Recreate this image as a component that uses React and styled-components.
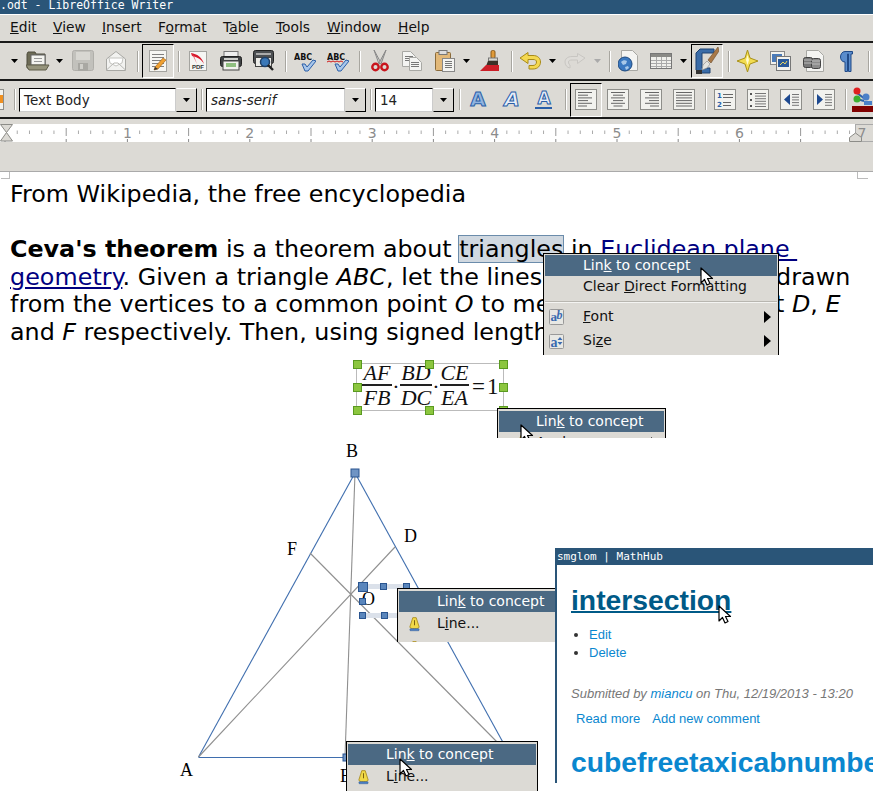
// Library Imports
import React from 'react'
import styled, { createGlobalStyle } from 'styled-components'

const GlobalStyle = createGlobalStyle`
  html, body {
    margin: 0;
    padding: 0;
    background: #fff;
    overflow: hidden;
  }
`

// Small toolbar drawings
const Svg = ({ w, h, children }) => (
  <svg width={w} height={h} viewBox={`0 0 ${w} ${h}`}>
    {children}
  </svg>
)

const Lines = ({ x, y, w, n, gap = 3, color = '#777' }) => (
  <g stroke={color} strokeWidth="1">
    {Array.from({ length: n }).map((_, i) => (
      <line key={i} x1={x} x2={x + w} y1={y + i * gap + 0.5} y2={y + i * gap + 0.5} />
    ))}
  </g>
)

const Page2 = ({ x = 0, y = 0, w = 16, h = 20 }) => (
  <path
    d={`M${x + 0.5} ${y + 0.5}h${w - 5}l5 5v${h - 5}h-${w}z`}
    fill="#f4f4f2"
    stroke="#a8a8a4"
  />
)

const Dropdown = () => (
  <Svg w={7} h={4}>
    <path d="M0 0h7L3.5 4z" fill="#000" />
  </Svg>
)

const DisabledDropdown = () => (
  <Svg w={7} h={4}>
    <path d="M0 0h7L3.5 4z" fill="#aaa" />
  </Svg>
)

const Folder = () => (
  <Svg w={24} h={20}>
    <path d="M1 17V3l1-2h7l1 2h9v14z" fill="#6d6b56" stroke="#4e4c3c" />
    <rect x="5" y="4" width="14" height="10" fill="#f4f4f0" stroke="#666" />
    <Lines x={8} y={7} w={8} n={2} gap={3} color="#999" />
    <path d="M0 14h20l3 0-3 5H3z" fill="#96947c" stroke="#5e5c48" />
  </Svg>
)

const Floppy = () => (
  <Svg w={22} h={22}>
    <rect x="0.5" y="0.5" width="21" height="20" rx="2" fill="#c2c1bc" stroke="#b0afaa" />
    <rect x="4" y="2" width="14" height="8" fill="#d8d7d2" />
    <rect x="6" y="13" width="10" height="8" fill="#a9a8a3" />
    <rect x="8" y="14" width="3" height="5" fill="#d0cfca" />
  </Svg>
)

const Mail = () => (
  <Svg w={20} h={20}>
    <path d="M0.5 8 10 0.5 19.5 8V19.5H0.5z" fill="#f2f2f0" stroke="#a8a8a4" />
    <path d="M3 7h14l-1 5-6 3-6-3z" fill="#fff" stroke="#c4c4c0" />
    <path d="M0.5 19 8 12h4l7.5 7" fill="none" stroke="#b8b8b4" />
  </Svg>
)

const EditDoc = () => (
  <Svg w={20} h={24}>
    <rect x="1.5" y="1.5" width="17" height="21" fill="#f6f6f3" stroke="#a4a4a0" />
    <Lines x={4} y={5} w={12} n={5} gap={3} color="#808080" />
    <path d="M7 18 15 9l3 2-8 9-4 1z" fill="#f0a030" stroke="#9a5a10" strokeWidth=".6" />
    <path d="M6 21l1-3 3 2z" fill="#333" />
  </Svg>
)

const Pdf = () => (
  <Svg w={18} h={20}>
    <rect x="0.5" y="0.5" width="17" height="19" fill="#f6f6f4" stroke="#a4a4a0" />
    <path d="M2 2c6 1 11 4 13 11-3-5-7-7-12-8z" fill="#d8182a" />
    <path d="M3 3 8 13 5 5z" fill="#e85060" />
    <text x="9" y="18" fontFamily="Liberation Sans" fontSize="6" fontWeight="700" textAnchor="middle" fill="#333">
      PDF
    </text>
  </Svg>
)

const Printer = () => (
  <Svg w={22} h={20}>
    <rect x="4" y="0.5" width="14" height="6" fill="#eee" stroke="#777" />
    <rect x="0.5" y="5.5" width="21" height="10" rx="2" fill="#3f4244" stroke="#222" />
    <rect x="4" y="7" width="14" height="2" fill="#cfd0cc" />
    <rect x="3" y="10" width="16" height="9" fill="#f2f2ee" stroke="#444" />
    <rect x="6" y="12" width="10" height="4" fill="#8fbf80" />
  </Svg>
)

const Preview = () => (
  <Svg w={22} h={22}>
    <rect x="0.5" y="0.5" width="20" height="13" rx="2" fill="#4c4f52" stroke="#222" />
    <rect x="3" y="3" width="15" height="2" fill="#aaa" />
    <rect x="2.5" y="7.5" width="16" height="9" fill="#ecece8" stroke="#444" />
    <circle cx="12" cy="12" r="4.5" fill="#3a78b8" stroke="#1d3f68" strokeWidth="1.5" />
    <path d="M15 15l5 5" stroke="#222" strokeWidth="2.4" />
  </Svg>
)

const AbcCheck = ({ wavy }) => (
  <Svg w={22} h={21}>
    <text x="0" y="9" fontFamily="DejaVu Sans" fontSize="8" fontWeight="700" fill="#111">
      ABC
    </text>
    {wavy && <path d="M0 11l2-1 2 1 2-1 2 1 2-1 2 1 2-1 2 1" stroke="#d01818" fill="none" />}
    <path
      d="M8 13l3 0 2 3 6-7 3 1-8 10h-3z"
      fill="#a8c6ea"
      stroke="#2a5ea8"
      strokeWidth="1"
    />
  </Svg>
)

const Scissors = () => (
  <Svg w={18} h={22}>
    <path d="M3 0 10 13 8 14z" fill="#d8d8d4" stroke="#888" />
    <path d="M15 0 8 13 10 14z" fill="#c4c4c0" stroke="#888" />
    <circle cx="4.5" cy="17" r="3.2" fill="none" stroke="#c8141c" strokeWidth="2.4" />
    <circle cx="13.5" cy="17" r="3.2" fill="none" stroke="#c8141c" strokeWidth="2.4" />
  </Svg>
)

const Copy = () => (
  <Svg w={20} h={20}>
    <Page2 x={0} y={0} w={13} h={15} />
    <Lines x={3} y={5} w={8} n={3} gap={2} />
    <Page2 x={7} y={6} w={12} h={13} />
    <Lines x={9} y={11} w={8} n={3} gap={2} />
  </Svg>
)

const Paste = () => (
  <Svg w={20} h={22}>
    <rect x="0.5" y="2.5" width="15" height="18" rx="1" fill="#e2b878" stroke="#8a6a3a" />
    <rect x="4" y="0.5" width="8" height="4" fill="#ddd" stroke="#777" />
    <rect x="7.5" y="8.5" width="12" height="13" fill="#f4f4f2" stroke="#888" />
    <Lines x={10} y={11} w={7} n={4} gap={2} />
  </Svg>
)

const Brush = () => (
  <Svg w={21} h={22}>
    <rect x="11" y="0.5" width="4" height="8" rx="1.5" fill="#e09a38" stroke="#8a5a18" />
    <rect x="8.5" y="8" width="9" height="3" fill="#d8d8d0" stroke="#777" />
    <path d="M8 11h10v5H6z" fill="#3a3228" />
    <path d="M0 21 6 15h13v6z" fill="#cc1f28" />
  </Svg>
)

const Undo = () => (
  <Svg w={22} h={18}>
    <path
      d="M1 6 9 0.5V3.5h5c5 0 7.5 3 7.5 6.5S19 17 14 17H10V13.5h4c2 0 3.5-1.5 3.5-3.5S16 7.5 14 7.5H9V11.5z"
      fill="#f4d850"
      stroke="#a88a18"
    />
  </Svg>
)

const Redo = () => (
  <Svg w={22} h={16}>
    <path
      d="M21 5 13.5 0.5V3.5H8C3.5 3.5 1 6 1 9s2 5.5 5 6V12c-1-.5-1.5-1.5-1.5-3S6 7 8 7h5.5v3.5z"
      fill="#dedcd8"
      stroke="#c8c6c2"
    />
  </Svg>
)

const Globe = () => (
  <Svg w={20} h={22}>
    <Page2 x={3} y={0} w={16} h={20} />
    <circle cx="7" cy="14" r="7" fill="#3a78c0" stroke="#1e4a80" />
    <path d="M3 12c2-2 4-2 6-1l-1 3-3 1zM7 17l3-1 1 2-3 2z" fill="#a8c8e8" />
  </Svg>
)

const Table = () => (
  <Svg w={22} h={16}>
    <rect x="0.5" y="0.5" width="21" height="15" fill="#f0f0ec" stroke="#777" />
    <rect x="1" y="1" width="20" height="3" fill="#8a8a86" />
    <g stroke="#aaa">
      <line x1="1" x2="21" y1="7.5" y2="7.5" />
      <line x1="1" x2="21" y1="10.5" y2="10.5" />
      <line x1="1" x2="21" y1="13.5" y2="13.5" />
      <line x1="6.5" x2="6.5" y1="4" y2="15" />
      <line x1="11.5" x2="11.5" y1="4" y2="15" />
      <line x1="16.5" x2="16.5" y1="4" y2="15" />
    </g>
  </Svg>
)

const StyleBrush = () => (
  <Svg w={24} h={28}>
    <path d="M1 6 5 2h14v4H7v15h8v5H4l-3-3z" fill="#3a6ca8" stroke="#1e4272" />
    <path d="M23 0 13 13l3 3L24 4z" fill="#a87848" stroke="#6a4a28" strokeWidth=".6" />
    <path d="M12 14l3 3-3 4-5 2 1-5z" fill="#e4e4e0" stroke="#888" strokeWidth=".6" />
    <rect x="1" y="23" width="6" height="4" fill="#333" />
  </Svg>
)

const Star = () => (
  <Svg w={21} h={22}>
    <path d="M10.5 0 13 8l8 3-8 3-2.5 8L8 14l-8-3 8-3z" fill="#f2dc50" stroke="#a89018" />
    <path d="M10.5 5 12 10 10.5 15 9 10z" fill="#fffbd0" />
  </Svg>
)

const Gallery = () => (
  <Svg w={21} h={20}>
    <rect x="0.5" y="0.5" width="14" height="13" fill="#f2f2ee" stroke="#888" />
    <rect x="2" y="3" width="10" height="8" fill="#4a7ab8" />
    <rect x="6.5" y="5.5" width="14" height="14" fill="#f2f2ee" stroke="#777" />
    <rect x="8" y="8" width="11" height="8" fill="#2a5a9a" />
    <path d="M10 14l3-3 2 2 2-3" stroke="#e8d860" fill="none" />
  </Svg>
)

const Database = () => (
  <Svg w={21} h={22}>
    <Page2 x={3} y={0} w={17} h={21} />
    <rect x="0.5" y="7.5" width="9" height="10" rx="2" fill="#777" stroke="#444" />
    <rect x="8.5" y="8.5" width="9" height="10" rx="2" fill="#8c8c8c" stroke="#444" />
    <path d="M1 10h8M9 11h8M9 14h8M1 13h8" stroke="#bbb" />
  </Svg>
)

const Pilcrow = () => (
  <Svg w={13} h={21}>
    <path
      d="M5 0.5h7.5V3H11v17.5H8.5V3H7.5v17.5H5V11C2 11 0.5 8.5 0.5 6S2 0.5 5 0.5z"
      fill="#5a8ccc"
      stroke="#204a88"
    />
  </Svg>
)

const FontA = ({ italic, underline, outline }) => (
  <Svg w={20} h={21}>
    <text
      x="10"
      y={underline ? 15 : 17}
      textAnchor="middle"
      fontFamily="DejaVu Sans"
      fontSize={underline ? 17 : 20}
      fontWeight="700"
      fontStyle={italic ? 'italic' : 'normal'}
      fill={outline ? '#e8eef8' : '#90b4e0'}
      stroke="#2a5ea8"
      strokeWidth="1"
    >
      A
    </text>
    {underline && <rect x="1" y="18" width="17" height="2" fill="#2a5ea8" />}
  </Svg>
)

const ParaFrame = ({ children }) => (
  <Svg w={22} h={21}>
    <rect x="0.5" y="0.5" width="21" height="20" fill="#f2f2ee" stroke="#8e8e8a" />
    {children}
  </Svg>
)

const Align = ({ kind }) => {
  const widths = [14, 10, 14, 10, 14, 9]
  return (
    <ParaFrame>
      <g stroke="#666">
        {widths.map((wd, i) => {
          const len = kind === 'justify' ? 16 : wd
          let x = 3
          if (kind === 'center') x = 11 - len / 2
          if (kind === 'right') x = 19 - len
          return <line key={i} x1={x} x2={x + len} y1={3.5 + i * 2.7} y2={3.5 + i * 2.7} />
        })}
      </g>
    </ParaFrame>
  )
}

const Numbered = () => (
  <ParaFrame>
    <text x="3" y="9" fontSize="7" fontFamily="DejaVu Sans" fontWeight="700" fill="#2a5ea8">1</text>
    <text x="3" y="18" fontSize="7" fontFamily="DejaVu Sans" fontWeight="700" fill="#2a5ea8">2</text>
    <Lines x={9} y={5} w={10} n={2} gap={3} color="#666" />
    <Lines x={9} y={13} w={8} n={2} gap={3} color="#666" />
  </ParaFrame>
)

const Bullets = () => (
  <ParaFrame>
    <g fill="#555">
      <rect x="3" y="4" width="2" height="2" />
      <rect x="3" y="10" width="2" height="2" />
      <rect x="3" y="16" width="2" height="2" />
    </g>
    <Lines x={8} y={4} w={11} n={6} gap={2.6} color="#777" />
  </ParaFrame>
)

const Indent = ({ more }) => (
  <ParaFrame>
    <path d={more ? 'M4 5v11l6-5.5z' : 'M10 5v11l-6-5.5z'} fill="#1e4a90" />
    <Lines x={12} y={5} w={7} n={5} gap={2.7} color="#777" />
  </ParaFrame>
)

const Navigator = () => (
  <Svg w={22} h={26}>
    <path d="M5 6l8 6M5 12l7 2" stroke="#2a5ea8" strokeWidth="2" />
    <circle cx="5" cy="4" r="3.5" fill="#e02020" />
    <circle cx="5" cy="12" r="3.5" fill="#3cb030" />
    <circle cx="14" cy="10" r="3.5" fill="#4a80c8" />
    <path d="M12 14h8v4h-8z" fill="#4a80c8" />
    <rect x="0" y="19" width="22" height="6" fill="#800000" />
  </Svg>
)

const FontBadge = () => (
  <Svg w={15} h={16}>
    <rect x="0.5" y="0.5" width="14" height="15" rx="1" fill="#e8e8e4" stroke="#999" />
    <text x="1.5" y="12" fontFamily="Liberation Serif" fontSize="13" fontWeight="700" fill="#3a6ab0">a</text>
    <text x="7.5" y="10" fontFamily="Liberation Serif" fontSize="12" fontStyle="italic" fontWeight="700" fill="#3a6ab0">b</text>
  </Svg>
)

const SizeBadge = () => (
  <Svg w={15} h={15}>
    <rect x="0.5" y="0.5" width="14" height="14" rx="1" fill="#e8e8e4" stroke="#999" />
    <text x="1.5" y="13" fontFamily="Liberation Serif" fontSize="14" fontWeight="700" fill="#3a6ab0">a</text>
    <path d="M8.5 6l2.5-3L13.5 6zM8.5 8l2.500 3L13.5 8z" fill="#3a6ab0" />
  </Svg>
)

const LineIcon = () => (
  <svg width="11" height="16" viewBox="0 0 13 17">
    <path d="M4.5 1h4L12 12c0 1.5-2 2-5.500 2S1 13.5 1 12z" fill="#f0d848" stroke="#a88a18" />
    <path d="M6.5 4v6" stroke="#7a6010" strokeWidth="1.2" />
    <rect x="1" y="14" width="11" height="2.5" rx="1" fill="#4a80c8" stroke="#2a5088" strokeWidth=".5" />
  </svg>
)

const PartIcon = () => (
  <Svg w={4} h={21}>
    <rect x="-4" y="0.5" width="7.5" height="20" fill="#f2f2ee" stroke="#8e8e8a" />
    <rect x="0" y="6" width="3" height="8" fill="#f09020" />
  </Svg>
)

const CursorShape = () => (
  <svg width="14" height="20" viewBox="0 0 14 20">
    <path
      d="M1 1v15l3.5-3.5L7 18l3-1.5-2.5-5H12.5z"
      fill="#fff"
      stroke="#000"
      strokeWidth="1.2"
      strokeLinejoin="round"
    />
  </svg>
)

const Cursor = ({ x, y }) => (
  <CursorBox $x={x} $y={y}>
    <CursorShape />
  </CursorBox>
)

// Data
const menuItems = [
  { key: 'edit', pre: '', u: 'E', post: 'dit', x: 10 },
  { key: 'view', pre: '', u: 'V', post: 'iew', x: 53 },
  { key: 'insert', pre: '', u: 'I', post: 'nsert', x: 102 },
  { key: 'format', pre: 'F', u: 'o', post: 'rmat', x: 158 },
  { key: 'table', pre: 'T', u: 'a', post: 'ble', x: 223 },
  { key: 'tools', pre: '', u: 'T', post: 'ools', x: 276 },
  { key: 'window', pre: '', u: 'W', post: 'indow', x: 327 },
  { key: 'help', pre: '', u: 'H', post: 'elp', x: 398 },
]

const mainTools = [
  { x: 11, w: 7, icon: <Dropdown /> },
  { x: 26, w: 24, icon: <Folder /> },
  { x: 56, w: 7, icon: <Dropdown /> },
  { x: 72, w: 22, icon: <Floppy /> },
  { x: 106, w: 20, icon: <Mail /> },
  { x: 137, sep: true },
  { x: 142, w: 32, active: true, icon: <EditDoc /> },
  { x: 178, sep: true },
  { x: 189, w: 18, icon: <Pdf /> },
  { x: 220, w: 22, icon: <Printer /> },
  { x: 253, w: 22, icon: <Preview /> },
  { x: 285, sep: true },
  { x: 294, w: 22, icon: <AbcCheck /> },
  { x: 327, w: 22, icon: <AbcCheck wavy /> },
  { x: 359, sep: true },
  { x: 371, w: 18, icon: <Scissors /> },
  { x: 402, w: 20, icon: <Copy /> },
  { x: 435, w: 20, icon: <Paste /> },
  { x: 463, w: 7, icon: <Dropdown /> },
  { x: 480, w: 21, icon: <Brush /> },
  { x: 511, sep: true },
  { x: 519, w: 22, icon: <Undo /> },
  { x: 549, w: 7, icon: <Dropdown /> },
  { x: 564, w: 22, icon: <Redo /> },
  { x: 594, w: 7, icon: <DisabledDropdown /> },
  { x: 609, sep: true },
  { x: 618, w: 20, icon: <Globe /> },
  { x: 650, w: 22, icon: <Table /> },
  { x: 680, w: 7, icon: <Dropdown /> },
  { x: 691, w: 32, active: true, icon: <StyleBrush /> },
  { x: 728, sep: true },
  { x: 737, w: 21, icon: <Star /> },
  { x: 770, w: 21, icon: <Gallery /> },
  { x: 803, w: 21, icon: <Database /> },
  { x: 840, w: 13, icon: <Pilcrow /> },
  { x: 868, sep: true },
]

const formatTools = [
  { x: 0, w: 4, icon: <PartIcon /> },
  { x: 14, sep: true },
  { x: 19, w: 178, combo: 'Text Body', field: 157 },
  { x: 201, sep: true },
  { x: 206, w: 160, combo: 'sans-serif', italic: true, field: 139 },
  { x: 370, sep: true },
  { x: 375, w: 79, combo: '14', field: 58 },
  { x: 459, sep: true },
  { x: 468, w: 20, icon: <FontA /> },
  { x: 502, w: 20, icon: <FontA italic outline /> },
  { x: 534, w: 20, icon: <FontA underline outline /> },
  { x: 565, sep: true },
  { x: 570, w: 32, active: true, icon: <Align kind="left" /> },
  { x: 607, w: 22, icon: <Align kind="center" /> },
  { x: 640, w: 22, icon: <Align kind="right" /> },
  { x: 673, w: 22, icon: <Align kind="justify" /> },
  { x: 705, sep: true },
  { x: 714, w: 22, icon: <Numbered /> },
  { x: 747, w: 22, icon: <Bullets /> },
  { x: 780, w: 22, icon: <Indent /> },
  { x: 813, w: 22, icon: <Indent more /> },
  { x: 845, sep: true },
  { x: 852, w: 22, icon: <Navigator /> },
]

const inchMarks = [1, 2, 3, 4, 5, 6]
const INCH = 122.4
const RULER_ORIGIN = 5

// Works out the gap in front of each tool from where it starts
const withGaps = items =>
  items.map((item, i) => {
    const prev = items[i - 1]
    const prevEnd = prev ? prev.x + (prev.sep ? 2 : prev.w) : 0
    return { ...item, gap: item.x - prevEnd }
  })

const ToolRow = ({ items, lowered }) => (
  <Toolbar $lowered={lowered}>
    {withGaps(items).map((item, i) => {
      if (item.sep) return <Separator key={i} $gap={item.gap} />
      if (item.combo) {
        return (
          <Combo key={i} $gap={item.gap} $w={item.w}>
            <ComboField $w={item.field} $italic={item.italic}>
              {item.combo}
            </ComboField>
            <ComboButton>
              <Dropdown />
            </ComboButton>
          </Combo>
        )
      }
      return (
        <Tool key={i} $gap={item.gap} $w={item.w} $active={item.active}>
          {item.icon}
        </Tool>
      )
    })}
  </Toolbar>
)

const Ruler = () => {
  const ticks = []
  for (let i = 0; i < 72; i++) {
    const x = RULER_ORIGIN + (i * INCH) / 10
    const tenth = i % 10
    if (tenth === 0) continue
    if (tenth === 5) {
      ticks.push(<line key={i} x1={x} x2={x} y1="4" y2="12" stroke="#999" />)
    } else {
      ticks.push(<line key={i} x1={x} x2={x} y1="6.5" y2="10" stroke="#aaa" />)
    }
  }
  const feet = []
  for (let i = 0; i < 15; i++) {
    const x = RULER_ORIGIN + (i * INCH) / 2
    feet.push(<line key={i} x1={x} x2={x} y1="15" y2="18" stroke="#888" />)
  }
  return (
    <RulerBand>
      <svg width="873" height="18" viewBox="0 0 873 18">
        <rect x="0" y="0" width="873" height="18" fill="#fff" />
        {ticks}
        {feet}
        {inchMarks.map(n => (
          <text
            key={n}
            x={RULER_ORIGIN + n * INCH}
            y="14"
            textAnchor="middle"
            fontFamily="DejaVu Sans"
            fontSize="14"
            fill="#8c8c8c"
          >
            {n}
          </text>
        ))}
        <path d="M0.5 0.5h12L6.5 8.5 12.5 17H0.5L6.5 8.5z" fill="#dcdad5" stroke="#8c8c88" />
        <rect x="855.5" y="0.5" width="18" height="17" fill="#dcdad5" stroke="#aaa" />
        <text x="862" y="14" textAnchor="middle" fontFamily="DejaVu Sans" fontSize="14" fill="#8c8c8c">
          7
        </text>
        <path d="M849.5 17.5v-4L855.5 9l6 4.5v4z" fill="#dcdad5" stroke="#8c8c88" />
      </svg>
    </RulerBand>
  )
}

const Figure = () => (
  <FigureBox>
    <svg width="873" height="351" viewBox="0 440 873 351">
      <g stroke="#3f6eae" strokeWidth="1.1" fill="none">
        <line x1="198.5" y1="757" x2="355" y2="473" />
        <line x1="355" y1="473" x2="511" y2="757" />
        <line x1="198.5" y1="757.5" x2="511" y2="757.5" />
      </g>
      <g stroke="#8f8f8f" strokeWidth="1.1" fill="none">
        <line x1="355" y1="473" x2="345" y2="757" />
        <line x1="198.5" y1="757" x2="395" y2="547" />
        <line x1="310" y1="553" x2="500" y2="745" />
      </g>
      <rect x="351" y="469" width="8" height="8" fill="#6f94c4" stroke="#2a5590" />
      <rect x="343" y="754" width="7" height="7" fill="#6f94c4" stroke="#2a5590" />
      <rect x="361" y="584" width="46" height="5" fill="#dbe1ea" />
      <rect x="361" y="613" width="46" height="5" fill="#dbe1ea" />
      <g fontFamily="Liberation Serif" fontSize="18" fill="#000">
        <text x="346" y="457">B</text>
        <text x="287" y="555">F</text>
        <text x="404" y="542">D</text>
        <text x="362" y="605">O</text>
        <text x="180" y="776">A</text>
        <text x="340" y="782">E</text>
      </g>
      <g fill="#5a86bc" stroke="#2a5590">
        <rect x="358.5" y="582.5" width="9" height="9" />
        <rect x="380.5" y="583.5" width="6" height="6" />
        <rect x="403.5" y="583.5" width="6" height="6" />
        <rect x="359.5" y="598.5" width="6" height="6" />
        <rect x="359.5" y="612.5" width="6" height="6" />
        <rect x="381.5" y="612.5" width="6" height="6" />
      </g>
    </svg>
  </FigureBox>
)

const Fraction = ({ top, bottom, w }) => (
  <Frac $w={w}>
    <FracTop>{top}</FracTop>
    <FracBottom>{bottom}</FracBottom>
  </Frac>
)

const LinkRow = () => (
  <MenuRow $active>
    Lin<u>k</u> to concept
  </MenuRow>
)

export default function App() {
  return (
    <>
      <GlobalStyle />
      <Page>
        <TitleBar>.odt - LibreOffice Writer</TitleBar>
        <MenuBar>
          {menuItems.map((m, i) => (
            <MenuLabel key={m.key} $gap={i === 0 ? m.x : 0} $w={menuItems[i + 1] ? menuItems[i + 1].x - m.x : 60}>
              {m.pre}
              <u>{m.u}</u>
              {m.post}
            </MenuLabel>
          ))}
        </MenuBar>
        <ToolRow items={mainTools} />
        <ToolRow items={formatTools} lowered />
        <RulerGap />
        <Ruler />
        <GrayGap />
        <Doc>
          <CornerLeft />
          <CornerRight />
          <Line>From Wikipedia, the free encyclopedia</Line>
          <Line>&nbsp;</Line>
          <Line>
            <b>Ceva's theorem</b> is a theorem about <Selected>triangles</Selected> in{' '}
            <DocLink>Euclidean plane </DocLink>
          </Line>
          <Line $spread>
            <DocLink>geometry</DocLink>. Given a triangle <i>ABC</i>, let the lines <i>AO</i>, <i>BO</i> and{' '}
            <i>CO</i> be drawn
          </Line>
          <Line>
            from the vertices to a common point <i>O</i> to meet opposite sides at <i>D</i>, <i>E</i>
          </Line>
          <Line>
            and <i>F</i> respectively. Then, using signed lengths of segments,
          </Line>
          <Formula>
            <FormulaFrame>
              <Fraction top="AF" bottom="FB" w={30} />
              <Dot>·</Dot>
              <Fraction top="BD" bottom="DC" w={32} />
              <Dot>·</Dot>
              <Fraction top="CE" bottom="EA" w={29} />
              <Equals>=1</Equals>
              <Handle $x="0%" $y="0%" />
              <Handle $x="49%" $y="0%" />
              <Handle $x="100%" $y="0%" />
              <Handle $x="0%" $y="50%" />
              <Handle $x="100%" $y="50%" />
              <Handle $x="0%" $y="100%" />
              <Handle $x="49%" $y="100%" />
              <Handle $x="100%" $y="100%" />
            </FormulaFrame>
          </Formula>
          <Figure />
        </Doc>

        <MenuBox $x={543} $y={253} $w={236} $h={102} $indent={38} $tight>
          <LinkRow />
          <MenuRow>
            Clear <u>D</u>irect Formatting
          </MenuRow>
          <MenuSeparator />
          <MenuRow $tall>
            <MenuIcon $left={4} $top={3}>
              <FontBadge />
            </MenuIcon>
            <u>F</u>ont
            <SubArrow />
          </MenuRow>
          <MenuRow $tall>
            <MenuIcon $left={4} $top={4}>
              <SizeBadge />
            </MenuIcon>
            Si<u>z</u>e
            <SubArrow />
          </MenuRow>
        </MenuBox>

        <MenuBox $x={497} $y={408} $w={169} $h={30} $indent={37}>
          <LinkRow />
          <MenuRow>
            <MenuIcon $left={18} $top={2}>
              <LineIcon />
            </MenuIcon>
            Anchor
            <SubArrow />
          </MenuRow>
          <CursorBox $x={22} $y={15}>
            <CursorShape />
          </CursorBox>
        </MenuBox>

        <MenuBox $x={397} $y={588} $w={170} $h={54} $indent={38}>
          <LinkRow />
          <MenuRow $icon>
            <MenuIcon $left={10} $top={4}>
              <LineIcon />
            </MenuIcon>
            L<u>i</u>ne...
          </MenuRow>
          <MenuRow>
            <MenuIcon $left={10} $top={5}>
              <LineIcon />
            </MenuIcon>
          </MenuRow>
        </MenuBox>

        <MenuBox $x={346} $y={741} $w={192} $h={50} $indent={38}>
          <LinkRow />
          <MenuRow $icon>
            <MenuIcon $left={10} $top={4}>
              <LineIcon />
            </MenuIcon>
            L<u>i</u>ne...
          </MenuRow>
        </MenuBox>

        <HubWindow>
          <HubTitle>smglom | MathHub</HubTitle>
          <HubBody>
            <HubHeading>intersection</HubHeading>
            <HubList>
              <li>
                <HubLink>Edit</HubLink>
              </li>
              <li>
                <HubLink>Delete</HubLink>
              </li>
            </HubList>
            <Submitted>
              Submitted by <HubLink>miancu</HubLink> on Thu, 12/19/2013 - 13:20
            </Submitted>
            <HubActions>
              <HubLink>Read more</HubLink>
              <HubLink>Add new comment</HubLink>
            </HubActions>
            <HubNext>cubefreetaxicabnumber</HubNext>
          </HubBody>
        </HubWindow>

        <Cursor x={700} y={267} />
        <Cursor x={718} y={605} />
        <Cursor x={399} y={758} />
      </Page>
    </>
  )
}

const Page = styled.div`
  position: relative;
  width: 873px;
  height: 791px;
  overflow: hidden;
  background: #fff;
  font-family: 'DejaVu Sans', sans-serif;
`

const TitleBar = styled.div`
  height: 14px;
  line-height: 11px;
  background: #2a5578;
  color: #fff;
  font-family: 'DejaVu Sans Mono', monospace;
  font-size: 11.5px;
  white-space: nowrap;
  border-bottom: 1px solid #fff;
  box-sizing: content-box;
`

const MenuBar = styled.div`
  height: 24px;
  padding-bottom: 2px;
  display: flex;
  align-items: center;
  background: #dcdad5;
  border-bottom: 2px solid #1a1a1a;
  box-sizing: content-box;
  font-size: 13.8px;
  color: #111;
`

const MenuLabel = styled.span`
  margin-left: ${p => p.$gap}px;
  width: ${p => p.$w}px;
  flex: none;
  white-space: nowrap;
`

const Toolbar = styled.div`
  height: ${p => (p.$lowered ? '35px' : '36px')};
  padding-top: ${p => (p.$lowered ? '1px' : '0')};
  display: flex;
  align-items: center;
  background: #dcdad5;
  border-bottom: 2px solid #1a1a1a;
  box-sizing: content-box;
  overflow: hidden;
`

const Tool = styled.div`
  flex: none;
  margin-left: ${p => p.$gap}px;
  width: ${p => p.$w}px;
  height: ${p => (p.$active ? '34px' : 'auto')};
  display: flex;
  align-items: center;
  justify-content: center;
  box-sizing: border-box;
  border: ${p => (p.$active ? '1px solid' : '0')};
  border-color: #000 #fff #fff #000;
  svg {
    display: block;
    flex: none;
  }
`

const Separator = styled.div`
  flex: none;
  margin-left: ${p => p.$gap}px;
  width: 1px;
  height: 21px;
  background: #a8a6a0;
  border-right: 1px solid #fff;
`

const Combo = styled.div`
  flex: none;
  margin-left: ${p => p.$gap}px;
  width: ${p => p.$w}px;
  height: 24px;
  display: flex;
`

const ComboField = styled.div`
  width: ${p => p.$w}px;
  box-sizing: border-box;
  flex: none;
  background: #fff;
  border: 1px solid;
  border-color: #000 #ccc #ccc #000;
  padding-left: 4px;
  font-size: 13.5px;
  font-style: ${p => (p.$italic ? 'italic' : 'normal')};
  line-height: 22px;
  color: #222;
`

const ComboButton = styled.div`
  flex: 1;
  box-sizing: border-box;
  display: flex;
  align-items: center;
  justify-content: center;
  background: #dcdad5;
  border: 1px solid;
  border-color: #fff #000 #000 #dcdad5;
`

const RulerGap = styled.div`
  height: 5px;
  background: #dcdad5;
`

const RulerBand = styled.div`
  height: 18px;
  svg {
    display: block;
  }
`

const GrayGap = styled.div`
  height: 29px;
  background: #dcdad5;
  border-bottom: 1px solid #aaa;
  box-sizing: content-box;
`

const Doc = styled.div`
  position: relative;
  padding: 9px 0 0 10px;
  background: #fff;
  color: #000;
  font-size: 23.8px;
`

const CornerLeft = styled.div`
  position: absolute;
  left: 1px;
  top: 0;
  width: 8px;
  height: 6px;
  border-right: 1px solid #bbb;
  border-bottom: 1px solid #bbb;
`

const CornerRight = styled.div`
  position: absolute;
  left: 857px;
  top: 0;
  width: 10px;
  height: 6px;
  border-left: 1px solid #bbb;
  border-bottom: 1px solid #bbb;
`

const Line = styled.div`
  height: 27.6px;
  line-height: 27.6px;
  white-space: nowrap;
  letter-spacing: ${p => (p.$spread ? '0.06px' : 'normal')};
`

const Selected = styled.span`
  display: inline-block;
  line-height: 26px;
  height: 26px;
  background: #d0d8e0;
  outline: 1px solid #6b8cab;
`

const DocLink = styled.span`
  color: #000080;
  text-decoration: underline;
  white-space: pre;
`

const Formula = styled.div`
  display: flex;
  margin: 16px 0 0 346px;
  height: 48px;
`

const FormulaFrame = styled.div`
  position: relative;
  width: 148px;
  height: 48px;
  box-sizing: border-box;
  border: 1px solid #bbb;
  display: flex;
  align-items: center;
  padding-left: 5px;
  font-family: 'Liberation Serif', serif;
  font-size: 22px;
  font-style: italic;
  color: #111;
`

const Handle = styled.div`
  position: absolute;
  left: ${p => p.$x};
  top: ${p => p.$y};
  width: 7px;
  height: 7px;
  margin: -4px 0 0 -4px;
  background: #8cc63f;
  border: 1px solid #5a9a20;
`

const Frac = styled.div`
  display: flex;
  flex-direction: column;
  align-items: center;
  width: ${p => p.$w}px;
  flex: none;
  line-height: 23px;
  margin-top: -1px;
`

const FracTop = styled.div`
  align-self: stretch;
  text-align: center;
  line-height: 22px;
  border-bottom: 2px solid #222;
`

const FracBottom = styled.div`
  text-align: center;
  line-height: 24px;
`

const Dot = styled.span`
  font-style: normal;
  width: 8px;
  flex: none;
  text-align: center;
`

const Equals = styled.span`
  font-style: normal;
  margin-left: 3px;
  font-size: 23px;
  letter-spacing: 2px;
`

const FigureBox = styled.div`
  margin: 29px 0 0 -10px;
  height: 351px;
  svg {
    display: block;
  }
`

const MenuBox = styled.div`
  position: absolute;
  left: ${p => p.$x}px;
  top: ${p => p.$y}px;
  width: ${p => p.$w}px;
  height: ${p => p.$h}px;
  overflow: hidden;
  box-sizing: border-box;
  background: #dcdad5;
  border: 1px solid #000;
  border-bottom: 0;
  padding: ${p => (p.$tight ? '1px 1px 0' : '2px 1px 0')};
  font-size: 14px;
  color: #111;
  --menu-indent: ${p => p.$indent}px;
`

const rowHeight = p => {
  if (p.$tall) return '24px'
  return p.$icon ? '23px' : '21px'
}

const rowLine = p => {
  if (p.$icon) return '22px'
  return '20px'
}

const MenuRow = styled.div`
  position: relative;
  height: ${rowHeight};
  line-height: ${rowLine};
  padding-left: var(--menu-indent);
  white-space: nowrap;
  background: ${p => (p.$active ? '#4b6983' : 'transparent')};
  color: ${p => (p.$active ? '#fff' : 'inherit')};
`

const MenuSeparator = styled.div`
  height: 9px;
  box-sizing: border-box;
  padding-top: 4px;
  &::before {
    content: '';
    display: block;
    height: 1px;
    background: #f4f4f2;
    border-top: 1px solid #b8b6b0;
  }
`

const MenuIcon = styled.span`
  position: absolute;
  left: ${p => p.$left}px;
  top: ${p => p.$top}px;
  display: flex;
`

const SubArrow = styled.span`
  position: absolute;
  right: 6px;
  top: 5px;
  width: 0;
  height: 0;
  border-left: 7px solid #000;
  border-top: 6px solid transparent;
  border-bottom: 6px solid transparent;
`

const HubWindow = styled.div`
  position: absolute;
  left: 555px;
  top: 548px;
  width: 318px;
  height: 235px;
  overflow: hidden;
  box-sizing: border-box;
  background: #fff;
  border-left: 2px solid #2a5578;
  font-family: 'Liberation Sans', Arial, sans-serif;
`

const HubTitle = styled.div`
  height: 17px;
  line-height: 17px;
  background: #2a5578;
  color: #fff;
  font-family: 'DejaVu Sans Mono', monospace;
  font-size: 11px;
  white-space: nowrap;
`

const HubBody = styled.div`
  padding: 19px 0 0 14px;
  font-size: 13px;
  white-space: nowrap;
`

const HubHeading = styled.div`
  font-size: 28.3px;
  line-height: 32px;
  font-weight: 700;
  color: #005a87;
  text-decoration: underline;
  text-decoration-thickness: 2px;
`

const HubList = styled.ul`
  margin: 10px 0 0;
  padding: 0 0 0 18px;
  line-height: 18px;
  color: #333;
`

const HubLink = styled.span`
  color: #0a87cf;
`

const Submitted = styled.div`
  margin-top: 23px;
  line-height: 18px;
  color: #777;
  font-style: italic;
`

const HubActions = styled.div`
  display: flex;
  gap: 12px;
  margin: 7px 0 0 5px;
  line-height: 18px;
`

const HubNext = styled.div`
  margin-top: 18px;
  font-size: 28.3px;
  line-height: 32px;
  font-weight: 700;
  color: #0a87cf;
`

const CursorBox = styled.div`
  position: absolute;
  left: ${p => p.$x}px;
  top: ${p => p.$y}px;
  width: 14px;
  height: 20px;
  svg {
    display: block;
  }
`
